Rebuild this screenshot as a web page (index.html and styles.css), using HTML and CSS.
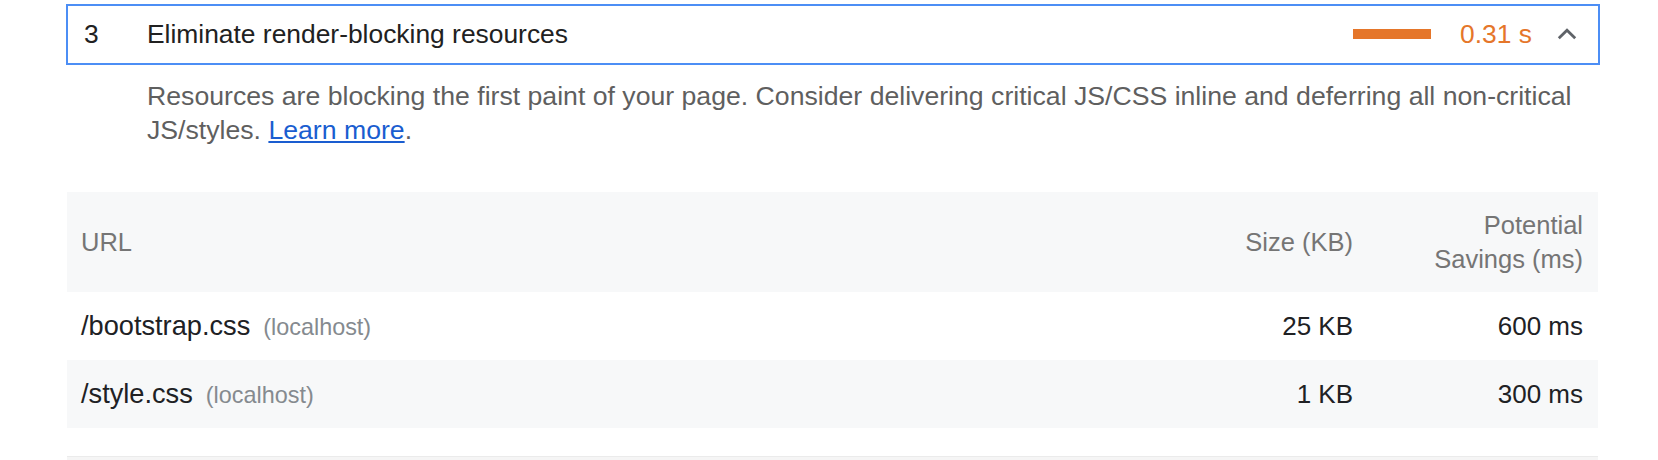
FILE: index.html
```html
<!DOCTYPE html>
<html lang="en">
<head>
<meta charset="utf-8">
<title>Eliminate render-blocking resources</title>
<link rel="stylesheet" href="styles.css">
</head>
<body>
<div class="audit">
  <div class="audit-header">
    <span class="audit-index">3</span>
    <span class="audit-title">Eliminate render-blocking resources</span>
    <span class="audit-bar"></span>
    <span class="audit-value">0.31 s</span>
    <svg class="chevron" width="20" height="12" viewBox="0 0 20 12" aria-hidden="true">
      <path d="M1.8 10.2 L10 2.2 L18.2 10.2" fill="none" stroke="#5f6368" stroke-width="2.8" stroke-linecap="butt" stroke-linejoin="miter"/>
    </svg>
  </div>
  <p class="audit-desc">Resources are blocking the first paint of your page. Consider delivering critical JS/CSS inline and deferring all non-critical JS/styles. <a href="#" class="link">Learn more</a>.</p>
  <div class="table">
    <div class="row head">
      <div class="cell">URL</div>
      <div class="cell num">Size (KB)</div>
      <div class="cell num">Potential Savings (ms)</div>
    </div>
    <div class="row">
      <div class="cell"><span class="url">/bootstrap.css</span><span class="host">(localhost)</span></div>
      <div class="cell num">25 KB</div>
      <div class="cell num">600 ms</div>
    </div>
    <div class="row alt">
      <div class="cell"><span class="url">/style.css</span><span class="host">(localhost)</span></div>
      <div class="cell num">1 KB</div>
      <div class="cell num">300 ms</div>
    </div>
  </div>
  <div class="divider"></div>
</div>
</body>
</html>
```

FILE: styles.css
```css
html, body {
  margin: 0;
  background: #ffffff;
}

body {
  padding: 4px 58px 0 66px;
  font-family: "Liberation Sans", Arial, Helvetica, sans-serif;
  color: #212121;
}

.audit-header {
  display: flex;
  align-items: center;
  height: 61px;
  box-sizing: border-box;
  border: 2px solid #4c8ef5;
  padding: 0 21px 2px 16px;
  font-size: 26.4px;
  line-height: 34px;
}

.audit-index {
  width: 63px;
  flex: none;
  color: #212121;
}

.audit-title {
  flex: 1;
  color: #212121;
}

.audit-bar {
  width: 78px;
  height: 10px;
  background: #e5762a;
  margin-right: 29px;
  margin-top: 1px;
}

.audit-value {
  color: #e5762a;
  margin-right: 25px;
}

.chevron {
  display: block;
  flex: none;
  margin-top: 1px;
}

.audit-desc {
  margin: 14px 0 0 81px;
  font-size: 26.65px;
  line-height: 34px;
  color: #5f5f5f;
}

.link {
  color: #1a5dd0;
  text-decoration: underline;
}

.table {
  margin: 45px 2px 0 1px;
  font-size: 26px;
  line-height: 34px;
}

.row {
  display: grid;
  grid-template-columns: 1fr 160px 170px;
  column-gap: 60px;
  align-items: center;
  padding: 0 15px 0 14px;
  height: 68px;
  color: #202124;
}

.row.head {
  height: 100px;
  background: #f7f8f9;
  color: #757575;
  font-size: 25.5px;
}

.row.alt {
  background: #f7f8f9;
}

.num {
  text-align: right;
}

.url {
  font-size: 27.2px;
}

.host {
  margin-left: 13px;
  font-size: 23.4px;
  color: #858a8f;
}

.divider {
  margin: 28px 2px 0 1px;
  height: 4px;
  border-top: 1px solid #ebebeb;
  background: #f5f5f5;
}
```
